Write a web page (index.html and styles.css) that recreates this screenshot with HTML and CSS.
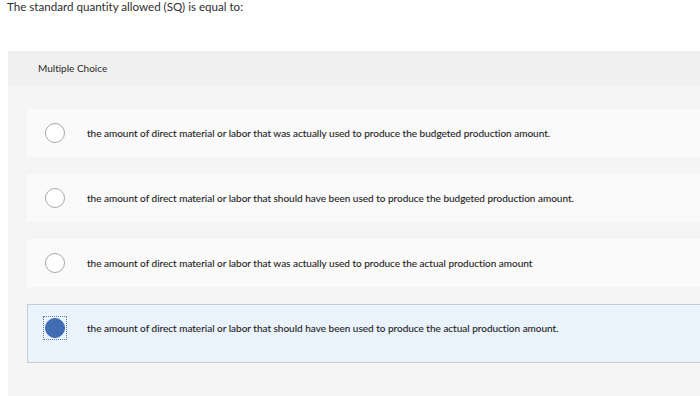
FILE: index.html
```html
<!DOCTYPE html>
<html lang="en">

<head>
    <meta charset="UTF-8">
    <title>Multiple Choice</title>
    <link rel="stylesheet" href="styles.css">
</head>

<body>
    <p class="question">The standard quantity allowed (SQ) is equal to:</p>
    <div class="panel">
        <div class="panel-header">Multiple Choice</div>
        <div class="choices">
            <label class="choice">
                <span class="radio"></span>
                <span class="choice-text">the amount of direct material or labor that was actually used to produce the budgeted production amount.</span>
            </label>
            <label class="choice">
                <span class="radio"></span>
                <span class="choice-text">the amount of direct material or labor that should have been used to produce the budgeted production amount.</span>
            </label>
            <label class="choice">
                <span class="radio"></span>
                <span class="choice-text">the amount of direct material or labor that was actually used to produce the actual production amount</span>
            </label>
            <label class="choice selected">
                <span class="radio-focus"><span class="radio checked"></span></span>
                <span class="choice-text">the amount of direct material or labor that should have been used to produce the actual production amount.</span>
            </label>
        </div>
    </div>
</body>

</html>
```

FILE: styles.css
```css
html, body {
    margin: 0;
    overflow: hidden;
}

body {
    font-family: Lato, "Liberation Sans", sans-serif;
    font-variant-ligatures: none;
    color: #333;
    background: #fff;
    height: 396px;
}

.question {
    margin: 0;
    padding: 0 0 0 7px;
    font-size: 11.6px;
    line-height: 13px;
    height: 51px;
    color: #2e2e2e;
}

.panel {
    margin-left: 8px;
    width: 760px;
    background: #f5f5f5;
    height: 345px;
}

.panel-header {
    background: #f0f0f0;
    font-size: 10px;
    height: 35px;
    line-height: 35px;
    padding-left: 30px;
    color: #2a2a2a;
}

.choices {
    display: flex;
    flex-direction: column;
    gap: 17px;
    padding: 23px 0 0 19px;
}

.choice {
    display: flex;
    align-items: flex-start;
    background: #fafafa;
    padding: 14px 0 14px 18px;
    font-size: 10px;
}

.choice-text {
    margin-left: 22px;
    line-height: 20px;
    color: #222;
    -webkit-text-stroke: 0.1px #222;
}

.radio {
    display: block;
    width: 18px;
    height: 18px;
    border: 1px solid #a9a9a9;
    border-radius: 50%;
    background: #fff;
    flex-shrink: 0;
}

.selected {
    background: #eaf2fc;
    border: 1px solid #c5ccd8;
    padding: 13px 0 24px 17px;
}

.radio-focus {
    display: block;
    margin: -2px;
    padding: 1px;
    border: 1px dotted #5a7cb3;
}

.radio.checked {
    background: #3f6cb3;
    border-color: #3f6cb3;
}
```
